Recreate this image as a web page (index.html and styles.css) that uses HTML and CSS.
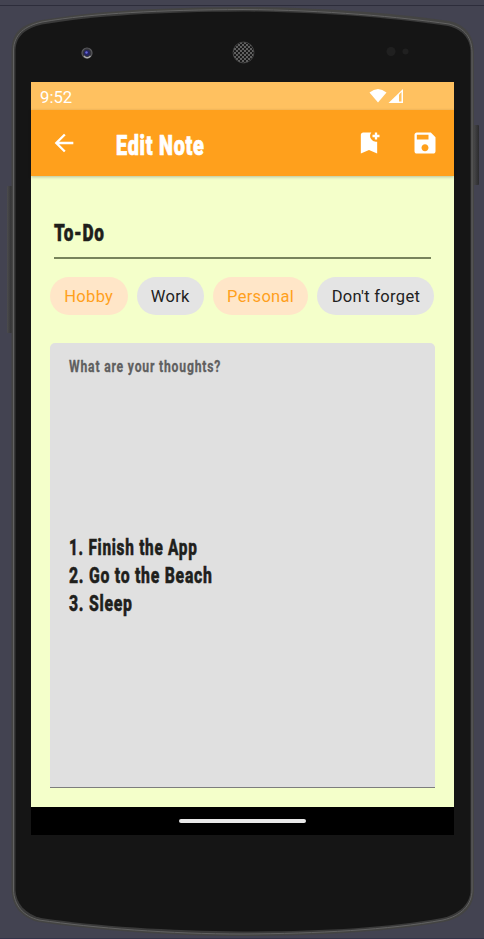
FILE: index.html
```html
<!DOCTYPE html>
<html lang="en">
<head>
<meta charset="utf-8">
<title>Edit Note</title>
<link rel="stylesheet" href="styles.css">
</head>
<body>
<svg class="device" viewBox="0 0 484 939" aria-hidden="true">
  <defs>
    <linearGradient id="key" x1="0" x2="1"><stop offset="0" stop-color="#4c4c4e"/><stop offset="1" stop-color="#2b2b2d"/></linearGradient>
    <pattern id="mesh" width="4" height="4" patternUnits="userSpaceOnUse"><rect width="4" height="4" fill="#606060"/><circle cx="1" cy="1" r="1.100" fill="#111"/><circle cx="3" cy="3" r="1.100" fill="#111"/></pattern>
  </defs>
  <path d="M0 5.500H484" stroke="#2d2d3b"/>
  <path d="M0 938.500H484" stroke="#34344a"/>
  <rect x="7" y="186" width="6" height="147" rx="1" fill="url(#key)"/>
  <rect x="473" y="125" width="6" height="60" rx="1" fill="url(#key)"/>
  <path d="M11.500 50C12 31 23 24 42 20C94 11 160 7.500 243 7C325 7.500 401 14 449 21C467 25 474 37 474 53V890C474 907 463 918 443 922C388 932 318 935.500 243 936C170 936 94 930 39 922C22 918 12 907 11.500 890Z" fill="#444443"/>
  <path d="M13.500 50C14 34 25 26 42 22C94 13 160 10 243 9.500C325 10 401 17 449 24C465 28 472 38 472 53V890C472 905 461 916 443 920C388 930 318 933.500 243 934C170 934 94 928 39 920C23 916 14 905 13.500 890Z" fill="#3a3a3a" stroke="#626262"/>
  <path d="M15.500 50C16 36 26 28 42 24.500C94 15.500 160 12 243 11.500C325 12 401 19 448 26C464 30 470.500 40 470.500 53V890C470.500 903 460 914 442 918C388 928 318 931.500 243 931.500C170 931 94 926 41 918C25 914 16 903 15.500 890Z" fill="#151515"/>
  <circle cx="87" cy="53" r="5" fill="#34343a" stroke="#5a5a5e" stroke-width="1.200"/>
  <circle cx="87" cy="53" r="3" fill="#242462"/>
  <circle cx="86.500" cy="52.500" r="1.200" fill="#6666dd"/>
  <path d="M84 56Q87 59.500 90.500 56" fill="none" stroke="#aaa" stroke-width="1.300"/>
  <circle cx="243.500" cy="52.500" r="10.500" fill="url(#mesh)" stroke="#4c4c4c" stroke-width=".7"/>
  <circle cx="391" cy="51.500" r="4.500" fill="#202020"/>
  <circle cx="405.500" cy="51.500" r="3" fill="#202020"/>
</svg>
<main class="screen">
  <div class="status">
    <span class="clock">9:52</span>
    <svg class="signals" viewBox="0 0 36 16">
      <path d="M.5 4.500Q9-2.500 17.500 4.500L9 14.500Z" fill="#fff"/>
      <path d="M19.500 15L34 1V15Z" fill="#fff"/>
      <path d="M30 6.500L32.500 4V13.500H30Z" fill="#ffc160"/>
    </svg>
  </div>
  <header class="bar">
    <svg class="icon back" viewBox="0 0 24 24"><path d="M20 11H7.830l5.590-5.590L12 4l-8 8 8 8 1.410-1.410L7.830 13H20z"/></svg>
    <h1 class="title"><span>Edit Note</span></h1>
    <svg class="icon bookmark" viewBox="0 0 24 24"><path d="M21 7h-2v2h-2V7h-2V5h2V3h2v2h2v2zm-2 14l-7-3-7 3V5c0-1.100.9-2 2-2h7a5 5 0 0 0 5 7.900V21z"/></svg>
    <svg class="icon save" viewBox="0 0 24 24"><path d="M17 3H5c-1.110 0-2 .9-2 2v14c0 1.100.89 2 2 2h14c1.100 0 2-.9 2-2V7l-4-4zm-5 16c-1.660 0-3-1.340-3-3s1.340-3 3-3 3 1.340 3 3-1.340 3-3 3zm3-10H5V5h10v4z"/></svg>
  </header>
  <section class="content">
    <div class="name"><span>To-Do</span></div>
    <div class="chips">
      <span class="chip on hobby">Hobby</span>
      <span class="chip work">Work</span>
      <span class="chip on personal">Personal</span>
      <span class="chip forget">Don't forget</span>
    </div>
    <div class="note">
      <div class="label"><span>What are your thoughts?</span></div>
      <div class="lines">
        <span class="first">1. Finish the App</span>
        <span>2. Go to the Beach</span>
        <span>3. Sleep</span>
      </div>
    </div>
  </section>
  <div class="nav"><div class="handle"></div></div>
</main>
</body>
</html>
```
FILE: styles.css
```css
* { box-sizing: border-box; }
body {
  margin: 0;
  height: 939px;
  overflow: hidden;
  padding: 82px 30px 0 31px;
  background: #434351;
  font-family: Roboto, sans-serif;
}
.device { position: absolute; left: 0; top: 0; width: 484px; height: 939px; }
.screen {
  position: relative;
  width: 423px;
  height: 753px;
  display: flex;
  flex-direction: column;
  background: #f4ffca;
}
.status {
  height: 28px;
  display: flex;
  align-items: center;
  padding: 2px 49px 0 9px;
  background: #ffc160;
  color: #fff;
}
.clock { font-size: 16.7px; }
.signals { width: 36px; height: 16px; margin: -2px 0 0 auto; }
.bar {
  height: 66px;
  flex: none;
  display: flex;
  align-items: center;
  padding: 0 15px 0 19px;
  background: #ffa01c;
  color: #fff;
  box-shadow: 0 1px 3px rgba(0, 0, 0, .25);
}
.icon { width: 28px; height: 28px; fill: #fff; flex: none; }
.title {
  flex: 1;
  margin: 5px 0 0 38px;
  font-size: 27px;
  line-height: 36px;
  font-weight: 900;
  letter-spacing: 1px;
  -webkit-text-stroke: .7px currentColor;
}
.title span, .name span, .label span, .lines span {
  display: inline-block;
  white-space: nowrap;
  transform-origin: 0 50%;
}
.title span { transform: scaleX(.735); }
.bookmark { margin-right: 28px; }
.content { flex: 1; padding: 38px 19px 19px; display: flex; flex-direction: column; color: #1f1f1c; }
.name {
  height: 45px;
  flex: none;
  margin: 0 4px 0 4px;
  padding-top: 2px;
  border-bottom: 2px solid #78845c;
  font-size: 24.5px;
  line-height: 34px;
  font-weight: 900;
  letter-spacing: 1px;
  -webkit-text-stroke: .5px currentColor;
}
.name span { transform: scaleX(.7); }
.chips { display: flex; gap: 9.3px; margin-top: 18px; }
.chip {
  height: 38px;
  border-radius: 19px;
  background: #e4e4e4;
  color: #212121;
  font-size: 16.5px;
  line-height: 39px;
  letter-spacing: .3px;
  text-align: center;
  white-space: nowrap;
}
.on { background: #ffe6c8; color: #ffa01c; }
.hobby { width: 77.5px; }
.work { width: 67px; }
.personal { width: 95px; }
.forget { width: 117px; }
.note {
  flex: 1;
  margin-top: 28px;
  padding: 11px 19px 0 18.5px;
  border-radius: 5px 5px 0 0;
  border-bottom: 1px solid #7d7d7d;
  background: #e0e0e0;
}
.label {
  height: 26px;
  color: #5f5f5f;
  font-size: 16.5px;
  line-height: 26px;
  font-weight: 700;
  letter-spacing: 1.1px;
  -webkit-text-stroke: .3px currentColor;
}
.label span { transform: scaleX(.737); }
.lines {
  display: flex;
  flex-direction: column;
  align-items: flex-start;
  margin-top: 154px;
  font-size: 21.5px;
  line-height: 28px;
  font-weight: 800;
  letter-spacing: 1px;
  -webkit-text-stroke: .5px currentColor;
}
.lines span { transform: scaleX(.735); }
.lines .first { transform: scaleX(.715); }
.nav { height: 28px; flex: none; background: #000; display: flex; align-items: center; justify-content: center; }
.handle { width: 127px; height: 4px; border-radius: 2px; background: #e8e8e8; }
```
